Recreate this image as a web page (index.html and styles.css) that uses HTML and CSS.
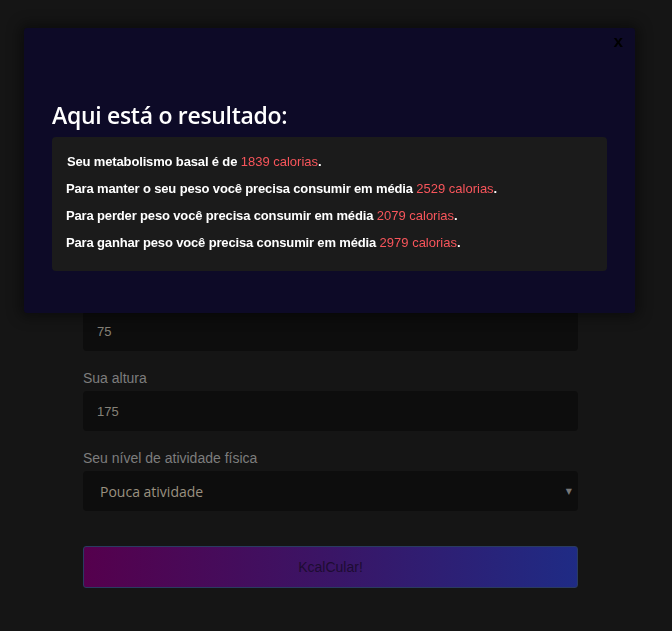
FILE: index.html
```html
<!DOCTYPE html>
<html lang="pt-BR">
<head>
<meta charset="utf-8">
<title>KcalCulator</title>
<link rel="stylesheet" href="styles.css">
</head>
<body>
<main class="page">
  <form class="form">
    <div class="field">
      <label class="label">Seu peso</label>
      <div class="input">75</div>
    </div>
    <div class="field">
      <label class="label">Sua altura</label>
      <div class="input">175</div>
    </div>
    <div class="field">
      <label class="label">Seu nível de atividade física</label>
      <div class="input select"><span>Pouca atividade</span><span class="arrow">▼</span></div>
    </div>
    <button type="button" class="btn">KcalCular!</button>
  </form>
</main>

<div class="modal">
  <span class="close">x</span>
  <h2 class="modal-title">Aqui está o resultado:</h2>
  <div class="result">
    <p class="first">Seu metabolismo basal é de <span class="kcal">1839 calorias</span>.</p>
    <p>Para manter o seu peso você precisa consumir em média <span class="kcal">2529 calorias</span>.</p>
    <p>Para perder peso você precisa consumir em média <span class="kcal">2079 calorias</span>.</p>
    <p>Para ganhar peso você precisa consumir em média <span class="kcal">2979 calorias</span>.</p>
  </div>
</div>
</body>
</html>
```
FILE: styles.css
```css
html, body {
  margin: 0;
  padding: 0;
  background: #151515;
  font-family: "Liberation Sans", Arial, sans-serif;
  height: 631px;
  overflow: hidden;
}

.page {
  padding: 289px 0 0 83px;
  width: 495px;
}

.form {
  display: flex;
  flex-direction: column;
}

.field {
  display: flex;
  flex-direction: column;
  gap: 4px;
  margin-bottom: 18px;
}

.label {
  font-size: 14px;
  line-height: 18px;
  color: #7d7d7d;
}

.input {
  height: 40px;
  box-sizing: border-box;
  background: #0d0d0d;
  border-radius: 4px;
  padding: 0 14px;
  display: flex;
  align-items: center;
  font-size: 13px;
  color: #858178;
}

.select {
  justify-content: space-between;
  padding: 0 6px 0 17px;
  font-family: "Open Sans", "Liberation Sans", sans-serif;
  font-size: 14px;
  color: #9a9180;
}

.arrow {
  font-size: 8px;
  color: #777;
  font-family: "DejaVu Sans", sans-serif;
}

.btn {
  margin-top: 17px;
  height: 42px;
  border: 1px solid #2a3b60;
  border-radius: 3px;
  background: linear-gradient(90deg, #55004d 0%, #3a1566 50%, #1f2b85 100%);
  color: #1d0c32;
  font-family: "Liberation Sans", Arial, sans-serif;
  font-size: 14px;
}

.modal {
  position: fixed;
  left: 24px;
  top: 28px;
  width: 611px;
  box-sizing: border-box;
  padding: 74px 28px 42px;
  background: #0d0a27;
  border-radius: 3px;
  box-shadow: 0 0 14px 4px rgba(0, 0, 0, 0.45);
}

.close {
  position: absolute;
  top: 4px;
  right: 12px;
  font-family: "Liberation Sans", Arial, sans-serif;
  font-weight: bold;
  font-size: 17px;
  color: #000;
}

.modal-title {
  margin: 0 0 9px;
  font-family: "Open Sans", sans-serif;
  font-weight: 600;
  font-size: 23px;
  line-height: 26px;
  color: #fff;
  letter-spacing: -0.3px;
}

.result {
  background: #1b1b1b;
  border-radius: 4px;
  padding: 11px 14px 15px;
}

.result p {
  margin: 0;
  line-height: 27px;
  font-family: "Liberation Sans", Arial, sans-serif;
  font-weight: bold;
  font-size: 13px;
  letter-spacing: -0.15px;
  color: #fff;
}

.result p.first {
  padding-left: 1px;
}

.kcal {
  color: #f8555b;
  font-weight: normal;
  letter-spacing: 0;
}
```
